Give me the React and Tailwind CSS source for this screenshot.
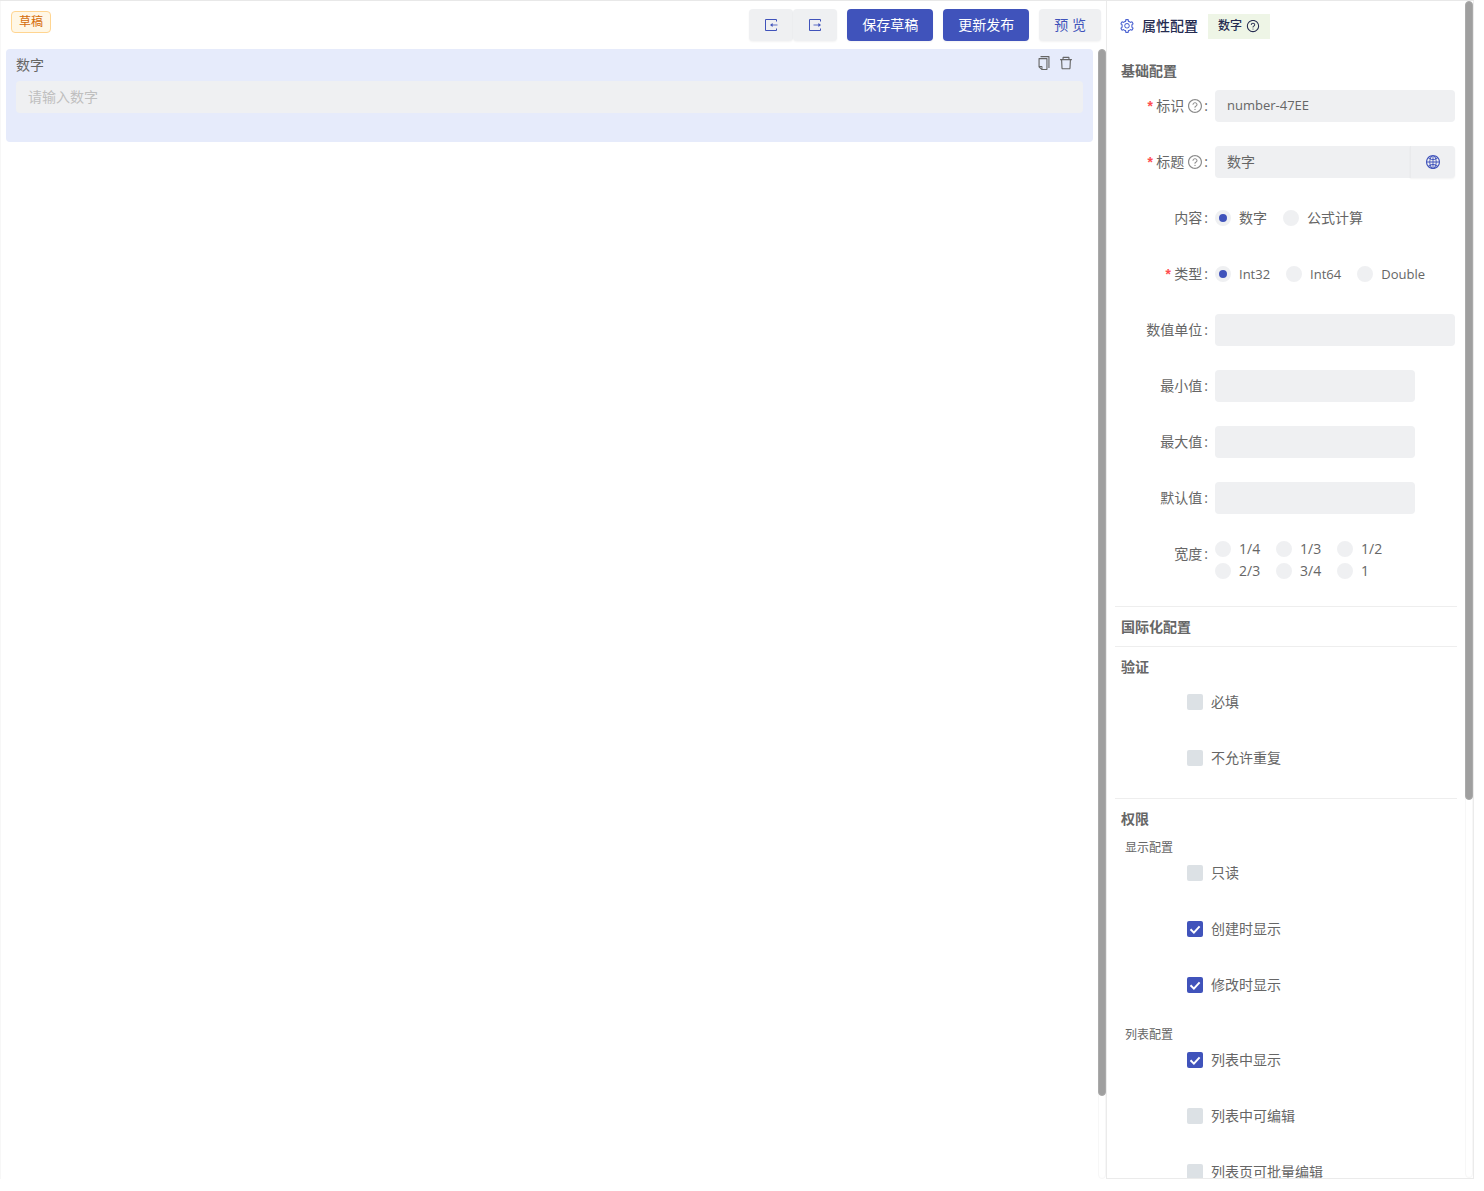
import React from "react";
import {
  AiOutlineCopy,
  AiOutlineDelete,
  AiOutlineGlobal,
  AiOutlineQuestionCircle,
  AiOutlineSetting,
} from "react-icons/ai";

const inputClass =
  "h-8 rounded-[4px] bg-[#eff0f2] px-3 pb-0.5 text-[#666] outline-none placeholder:text-[#bfbfbf]";

function BoxArrow({ direction }) {
  return (
    <svg viewBox="0 0 14 14" className="size-3.5" fill="none" stroke="currentColor">
      <path d="M12.5 3.5V1.5H1.5V12.5H12.5V10.5" />
      {direction === "in" ? (
        <>
          <path d="M8 7H13.5" strokeWidth="1.4" opacity="0.6" />
          <path d="M6 7 8.6 5V9Z" fill="currentColor" stroke="none" />
        </>
      ) : (
        <>
          <path d="M5.5 7H11" strokeWidth="1.4" opacity="0.6" />
          <path d="M13 7 10.4 5V9Z" fill="currentColor" stroke="none" />
        </>
      )}
    </svg>
  );
}

function Scrollbar({ thumb }) {
  return (
    <div aria-hidden="true" className="w-2 shrink-0 rounded-full border border-[#f7f7f7]">
      <div
        className="-mx-px -mt-px rounded-full border border-[#aaa] bg-[#9f9f9f]"
        style={{ height: thumb }}
      />
    </div>
  );
}

function Row({ label, htmlFor, required, help, children }) {
  const Tag = htmlFor ? "label" : "span";
  return (
    <div className="mb-6 flex items-start pr-0.5">
      <Tag
        htmlFor={htmlFor}
        className="flex h-8 w-25 shrink-0 items-center justify-end pr-[7px]"
      >
        {required && (
          <span className="mr-0.5 pt-1 font-['Liberation_Mono'] text-sm font-bold text-[#ff4d4f]">
            *
          </span>
        )}
        {label}
        {help && <AiOutlineQuestionCircle className="ml-[3px] size-4 text-[#8c8c8c]" />}
        <span className={help ? "ml-px" : "ml-0.5"}>:</span>
      </Tag>
      {children}
    </div>
  );
}

function Radio({ name, label, checked }) {
  return (
    <label className="flex items-center gap-2">
      <input
        type="radio"
        name={name}
        defaultChecked={checked}
        className="size-4 shrink-0 appearance-none rounded-full border-4 border-[#eff0f2] bg-[#eff0f2] checked:bg-[#4053bb]"
      />
      {label}
    </label>
  );
}

function Check({ label, checked }) {
  return (
    <div className="mb-6 flex h-8 items-center pl-18">
      <label className="flex items-center gap-2">
        <span className="grid size-4">
          <input
            type="checkbox"
            defaultChecked={checked}
            className="peer size-4 appearance-none rounded-[2px] bg-[#dce1e5] [grid-area:1/1] checked:bg-[#4053bb]"
          />
          <svg
            viewBox="0 0 16 16"
            className="pointer-events-none invisible size-4 [grid-area:1/1] peer-checked:visible"
            fill="none"
            stroke="#fff"
            strokeWidth="2"
          >
            <path d="M3.5 8.3 6.9 11.6 12.6 5.4" />
          </svg>
        </span>
        {label}
      </label>
    </div>
  );
}

function Title({ children }) {
  return (
    <h2 className="flex h-[39px] items-center pl-1.5 text-sm font-bold">{children}</h2>
  );
}

function Section({ title, children }) {
  return (
    <section className="border-t border-[#eee]">
      <Title>{title}</Title>
      {children}
    </section>
  );
}

function Subtitle({ children }) {
  return <h3 className="flex h-[19px] items-center pl-2.5 text-xs">{children}</h3>;
}

const primaryButton =
  "h-8 rounded-[4px] bg-[#4053bb] px-[15px] text-sm text-white shadow-xs shadow-black/5";
const iconButton =
  "flex h-8 items-center justify-center bg-[#eff0f2] text-[#4053bb] shadow-xs shadow-black/5";

export default function App() {
  return (
    <div className="h-screen bg-white pr-2.5 pb-3 font-['Open_Sans','Noto_Sans_CJK_SC',sans-serif] text-sm/[22px] text-[#666]">
      <div className="flex h-full border-t border-[#e8e8e8]">
        <main className="flex min-w-0 flex-1 flex-col border-l border-[#f7f7f7]">
          <header className="flex h-12 shrink-0 items-center justify-between pr-[5px] pl-2.5">
            <span className="-mt-1.5 rounded-[4px] border border-[#ffd591] bg-[#fff7e6] px-[7px] text-xs/5 text-[#d46b08]">
              草稿
            </span>
            <div className="flex gap-2.5">
              <div className="flex">
                <button
                  type="button"
                  aria-label="导入"
                  className={iconButton + " w-11 rounded-[4px]"}
                >
                  <BoxArrow direction="in" />
                </button>
                <button
                  type="button"
                  aria-label="导出"
                  className={iconButton + " w-11 rounded-[4px]"}
                >
                  <BoxArrow direction="out" />
                </button>
              </div>
              <button type="button" className={primaryButton}>保存草稿</button>
              <button type="button" className={primaryButton}>更新发布</button>
              <button
                type="button"
                className="h-8 rounded-[4px] bg-[#eff0f2] px-[15px] text-sm text-[#4053bb] shadow-xs shadow-black/5"
              >
                预 览
              </button>
            </div>
          </header>
          <div className="flex min-h-0 flex-1">
            <div className="min-w-0 flex-1 px-[5px]">
              <div className="rounded-[4px] bg-[#e6ebfb] px-2.5 pt-[5px] pb-[29px]">
                <div className="flex items-start justify-between pb-[5px]">
                  <label htmlFor="preview">数字</label>
                  <div className="flex gap-1.5 pt-px pr-[9px]">
                    <button type="button" aria-label="复制">
                      <AiOutlineCopy className="size-4" />
                    </button>
                    <button type="button" aria-label="删除">
                      <AiOutlineDelete className="size-4" />
                    </button>
                  </div>
                </div>
                <input
                  id="preview"
                  type="text"
                  placeholder="请输入数字"
                  className={inputClass + " block w-full text-sm"}
                />
              </div>
            </div>
            <Scrollbar thumb="92.8%" />
          </div>
        </main>

        <aside className="flex w-[368px] shrink-0 border-x border-b border-[#ebebeb]">
          <div className="min-w-0 flex-1 overflow-hidden px-2">
            <header className="flex h-[50px] items-center pl-1 text-[#252b50]">
              <AiOutlineSetting className="size-4 text-[#4c63d2]" />
              <h1 className="ml-[7px] text-sm font-medium">属性配置</h1>
              <span className="ml-2.5 flex h-[25px] items-center gap-1 bg-[#eef5e6] px-2.5 text-xs font-medium">
                数字
                <AiOutlineQuestionCircle className="size-3.5" />
              </span>
            </header>
            <Title>基础配置</Title>
            <Row label="标识" htmlFor="key" required help>
              <input
                id="key"
                type="text"
                defaultValue="number-47EE"
                className={inputClass + " min-w-0 flex-1 text-[13px]"}
              />
            </Row>
            <Row label="标题" htmlFor="title" required help>
              <input
                id="title"
                type="text"
                defaultValue="数字"
                className={inputClass + " min-w-0 flex-1 rounded-r-none text-sm"}
              />
              <button
                type="button"
                aria-label="多语言"
                className={iconButton + " w-[45px] rounded-r-[4px] border-l border-[#e9eaec]"}
              >
                <AiOutlineGlobal className="size-4" />
              </button>
            </Row>
            <Row label="内容">
              <div className="flex h-8 items-center gap-4">
                <Radio name="content" label="数字" checked />
                <Radio name="content" label="公式计算" />
              </div>
            </Row>
            <Row label="类型" required>
              <div className="flex h-8 items-center gap-4 text-[13px]">
                <Radio name="type" label="Int32" checked />
                <Radio name="type" label="Int64" />
                <Radio name="type" label="Double" />
              </div>
            </Row>
            <Row label="数值单位" htmlFor="unit">
              <input id="unit" type="text" className={inputClass + " min-w-0 flex-1 text-sm"} />
            </Row>
            <Row label="最小值" htmlFor="min">
              <input id="min" type="text" className={inputClass + " w-50 text-sm"} />
            </Row>
            <Row label="最大值" htmlFor="max">
              <input id="max" type="text" className={inputClass + " w-50 text-sm"} />
            </Row>
            <Row label="默认值" htmlFor="default">
              <input id="default" type="text" className={inputClass + " w-50 text-sm"} />
            </Row>
            <Row label="宽度">
              <div className="grid grid-cols-[61px_61px_61px]">
                {["1/4", "1/3", "1/2", "2/3", "3/4", "1"].map((w) => (
                  <Radio key={w} name="width" label={w} />
                ))}
              </div>
            </Row>
            <Section title="国际化配置" />
            <Section title="验证">
              <Check label="必填" />
              <Check label="不允许重复" />
            </Section>
            <Section title="权限">
              <Subtitle>显示配置</Subtitle>
              <Check label="只读" />
              <Check label="创建时显示" checked />
              <Check label="修改时显示" checked />
              <Subtitle>列表配置</Subtitle>
              <Check label="列表中显示" checked />
              <Check label="列表中可编辑" />
              <Check label="列表页可批量编辑" />
            </Section>
          </div>
          <Scrollbar thumb="68%" />
        </aside>
      </div>
    </div>
  );
}
